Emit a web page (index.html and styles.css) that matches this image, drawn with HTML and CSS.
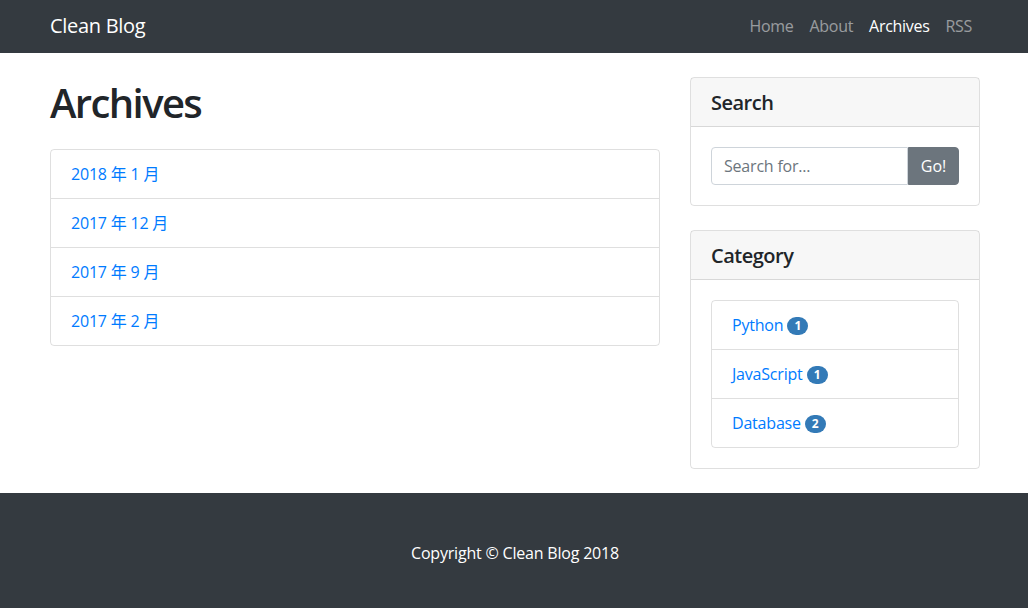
FILE: index.html
```html
<!DOCTYPE html>
<html lang="en">
<head>
<meta charset="utf-8">
<title>Archives - Clean Blog</title>
<link rel="stylesheet" href="styles.css">
</head>
<body>
<nav class="navbar">
  <div class="container navbar-inner">
    <a class="brand" href="#">Clean Blog</a>
    <ul class="nav">
      <li><a class="nav-link" href="#">Home</a></li>
      <li><a class="nav-link" href="#">About</a></li>
      <li><a class="nav-link active" href="#">Archives</a></li>
      <li><a class="nav-link" href="#">RSS</a></li>
    </ul>
  </div>
</nav>

<main class="container main">
  <div class="row">
    <section class="col-main">
      <h1 class="page-title">Archives</h1>
      <ul class="list-group">
        <li class="list-item"><a href="#">2018 年 1 月</a></li>
        <li class="list-item"><a href="#">2017 年 12 月</a></li>
        <li class="list-item"><a href="#">2017 年 9 月</a></li>
        <li class="list-item"><a href="#">2017 年 2 月</a></li>
      </ul>
    </section>
    <aside class="col-side">
      <div class="card">
        <h5 class="card-header">Search</h5>
        <div class="card-body">
          <div class="input-group">
            <input class="form-control" type="text" placeholder="Search for...">
            <button class="btn" type="button">Go!</button>
          </div>
        </div>
      </div>
      <div class="card">
        <h5 class="card-header">Category</h5>
        <div class="card-body">
          <ul class="list-group">
            <li class="list-item"><a href="#">Python</a> <span class="badge">1</span></li>
            <li class="list-item"><a href="#">JavaScript</a> <span class="badge">1</span></li>
            <li class="list-item"><a href="#">Database</a> <span class="badge">2</span></li>
          </ul>
        </div>
      </div>
    </aside>
  </div>
</main>

<footer class="footer">
  <div class="container">
    <p class="copyright">Copyright © Clean Blog 2018</p>
  </div>
</footer>
</body>
</html>
```
FILE: styles.css
```css
* { box-sizing: border-box; }
html, body { margin: 0; padding: 0; }
body {
  font-family: "Open Sans", "Noto Sans CJK SC", sans-serif;
  font-size: 16px;
  line-height: 1.5;
  color: #212529;
  background: #fff;
}
a { color: #007bff; text-decoration: none; }
ul { margin: 0; padding: 0; list-style: none; }

.container {
  width: 960px;
  margin: 0 auto;
  padding: 0 14px 0 16px;
}

.navbar { background: #343a40; }
.navbar-inner {
  height: 53px;
  padding-bottom: 2px;
  display: flex;
  align-items: center;
  justify-content: space-between;
}
.brand {
  color: #fff;
  font-size: 20px;
  line-height: 30px;
  letter-spacing: -0.3px;
}
.nav { display: flex; }
.nav-link {
  display: block;
  padding: 8px;
  color: rgba(255,255,255,.5);
  letter-spacing: -0.3px;
}
.nav-link.active { color: #fff; }

.main { padding-top: 24px; padding-bottom: 24px; }
.row { display: flex; margin: 0 -15px; }
.col-main { width: 640px; padding: 0 15px; }
.col-side { width: 320px; padding: 0 15px; }

.page-title {
  font-size: 40px;
  font-weight: 600;
  line-height: 48px;
  letter-spacing: -1.6px;
  margin: 0 0 24px;
  padding-top: 2px;
  height: 48px;
}

.list-group {
  border: 1px solid rgba(0,0,0,.125);
  border-radius: 4px;
}
.list-item {
  padding: 12px 20px;
  border-top: 1px solid rgba(0,0,0,.125);
  line-height: 24px;
  letter-spacing: -0.2px;
}
.list-item:first-child { border-top: 0; }

.card {
  border: 1px solid rgba(0,0,0,.125);
  border-radius: 4px;
  margin-bottom: 24px;
}
.card:last-child { margin-bottom: 0; }
.card-header {
  margin: 0;
  padding: 13px 20px 11px;
  font-size: 20px;
  font-weight: 600;
  line-height: 24px;
  letter-spacing: -0.5px;
  background: rgba(0,0,0,.03);
  border-bottom: 1px solid rgba(0,0,0,.125);
}
.card-body { padding: 20px; }

.input-group { display: flex; }
.form-control {
  flex: 1;
  min-width: 0;
  height: 38px;
  padding: 6px 12px;
  font: inherit;
  letter-spacing: -0.2px;
  color: #495057;
  border: 1px solid #ced4da;
  border-radius: 4px 0 0 4px;
  outline: none;
}
.form-control::placeholder { color: #6c757d; }
.btn {
  width: 51px;
  height: 38px;
  padding: 6px 0;
  font: inherit;
  color: #fff;
  background: #6c757d;
  border: 1px solid #6c757d;
  border-radius: 0 4px 4px 0;
}

.badge {
  display: inline-block;
  min-width: 21px;
  padding: 2px 7px;
  font-size: 12px;
  font-weight: 700;
  line-height: 14px;
  letter-spacing: 0;
  color: #fff;
  text-align: center;
  background: #337ab7;
  border-radius: 10px;
  vertical-align: 1px;
}

.footer {
  background: #343a40;
  padding: 48px 0;
}
.copyright {
  margin: 0;
  text-align: center;
  color: #fff;
  line-height: 24px;
  letter-spacing: -0.2px;
}
```
